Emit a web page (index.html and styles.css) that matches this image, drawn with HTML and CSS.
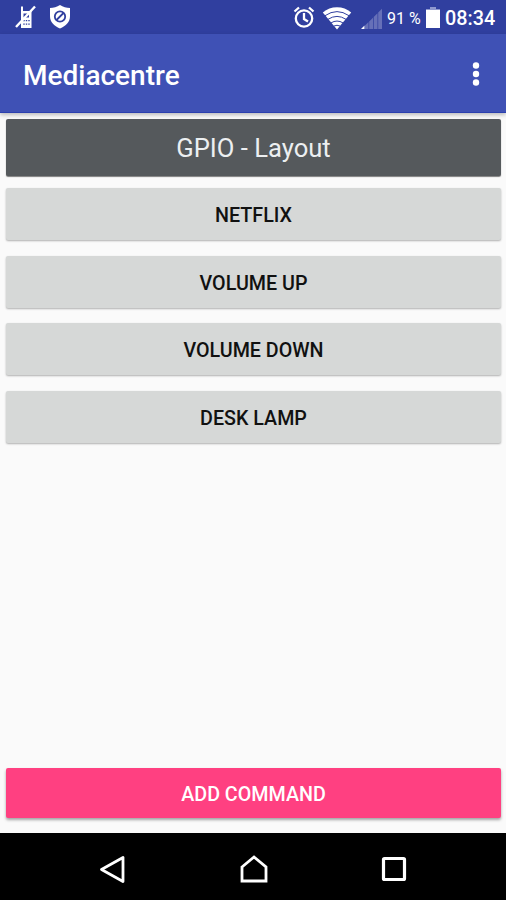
FILE: index.html
```
<!DOCTYPE html>
<html lang="en">
<head>
    <meta charset="UTF-8">
    <meta name="viewport" content="width=device-width, initial-scale=1.0">
    <title>Mediacentre</title>
    <link rel="stylesheet" href="styles.css">
</head>
<body>
    <div class="status-bar">
        <!-- phone muted -->
        <svg class="icon-phone" width="22" height="24" viewBox="0 0 22 24">
            <path fill="#fff" d="M6 6V1.500h2V6h8.500v17H6z"/>
            <path fill="#303f9f" d="M8.500 8.500h5.500v4H8.500zM8.300 15h1.400v1.300H8.300zM10.800 15h1.400v1.300h-1.400zM13.300 15h1.400v1.300h-1.400zM8.300 18.500h1.400v1.300H8.300zM10.800 18.500h1.400v1.300h-1.400zM13.300 18.500h1.400v1.300h-1.400z"/>
            <path stroke="#fff" stroke-width="2.400" d="M1 22L20 1.500"/>
        </svg>
        <!-- shield -->
        <svg class="icon-shield" width="22" height="24" viewBox="0 0 22 24">
            <path fill="#fff" d="M11 0C8 2 4.500 3 1 3v8c0 6 4 10 10 12.500C17 21 21 17 21 11V3C17.500 3 14 2 11 0z"/>
            <circle cx="11" cy="11.500" r="5.200" fill="none" stroke="#303f9f" stroke-width="1.800"/>
            <path stroke="#303f9f" stroke-width="1.800" d="M7.500 15l7-7"/>
        </svg>
        <div class="spacer"></div>
        <!-- alarm -->
        <svg class="icon-alarm" width="22" height="23" viewBox="0 0 22 23">
            <g fill="none" stroke="#fff" stroke-width="2.300">
                <circle cx="11" cy="12.500" r="8.200"/>
                <path d="M11 7v6l4 2.500M1.500 5.500L6 1.500M20.500 5.500L16 1.500"/>
            </g>
        </svg>
        <!-- wifi -->
        <svg class="icon-wifi" width="30" height="24" viewBox="0 0 30 24">
            <path fill="#fff" d="M15 23.500L.8 6.500C5 2.800 9.500 1.200 15 1.200s10 1.600 14.200 5.300z"/>
            <path fill="none" stroke="#303f9f" stroke-width="1" d="M3 9.700Q15 1.500 27 9.700M6 13.300Q15 7.500 24 13.300M9 16.900Q15 13.200 21 16.900M12 20Q15 18.500 18 20"/>
        </svg>
        <!-- signal -->
        <svg class="icon-signal" width="22" height="22" viewBox="0 0 22 22">
            <path fill="#6670b8" d="M4 17.500l3.500-3.400V21H4zM8.200 13.500l3.800-3.800V21H8.200zM12.700 9l3.800-3.800V21h-3.800zM17.200 4.500L21 .8V21h-3.800z"/>
            <path fill="#fff" d="M0 21l3.500-3.500V21z"/>
        </svg>
        <span class="percent">91 %</span>
        <!-- battery -->
        <svg class="icon-battery" width="14" height="21" viewBox="0 0 14 21">
            <path fill="#8f98cf" d="M4 0h6v2h4v2H0V2h4z"/>
            <path fill="#fff" d="M0 3h14v18H0z"/>
        </svg>
        <span class="clock">08:34</span>
    </div>

    <header>
        <h1>Mediacentre</h1>
        <svg class="icon-more" width="8" height="24" viewBox="0 0 8 24">
            <g fill="#fff">
                <circle cx="4" cy="3.500" r="3.200"/>
                <circle cx="4" cy="12" r="3.200"/>
                <circle cx="4" cy="20.500" r="3.200"/>
            </g>
        </svg>
    </header>

    <main>
        <div class="layout-title">GPIO - Layout</div>
        <div class="commands">
            <button class="command">NETFLIX</button>
            <button class="command">VOLUME UP</button>
            <button class="command">VOLUME DOWN</button>
            <button class="command">DESK LAMP</button>
        </div>
        <button class="add-command">ADD COMMAND</button>
    </main>

    <footer>
        <svg width="28" height="30" viewBox="0 0 28 30">
            <path fill="none" stroke="#fff" stroke-width="2.800" stroke-linejoin="round" d="M25 3.500v24L3.500 15.500z"/>
        </svg>
        <svg width="30" height="30" viewBox="0 0 30 30">
            <path fill="none" stroke="#fff" stroke-width="2.800" d="M3 13L15 3l12 10v14H3z"/>
        </svg>
        <svg width="26" height="30" viewBox="0 0 26 30">
            <rect x="2.500" y="4.500" width="21" height="21" rx="1" fill="none" stroke="#fff" stroke-width="3.200"/>
        </svg>
    </footer>
</body>
</html>
```
FILE: styles.css
```
* {
    box-sizing: border-box;
}
body {
    font-family: Roboto, "Liberation Sans", sans-serif;
    margin: 0;
    height: 900px;
    display: flex;
    flex-direction: column;
    background-color: #fafafa;
    overflow: hidden;
}
svg {
    display: block;
    flex: none;
}
.status-bar {
    height: 34px;
    padding: 0 11px 0 15px;
    display: flex;
    align-items: center;
    background-color: #303f9f;
    color: #fff;
    white-space: nowrap;
}
.icon-shield {
    margin-left: 12px;
}
.spacer {
    flex: 1;
}
.icon-wifi {
    margin-left: 7px;
    margin-top: 2px;
}
.icon-signal {
    margin-left: 9px;
    margin-top: 3px;
}
.percent {
    width: 39px;
    padding-left: 4px;
    font-size: 16px;
    margin-top: 2px;
}
.icon-battery {
    margin-left: 4px;
    margin-top: 1px;
}
.clock {
    width: 50px;
    margin-left: 5px;
    margin-top: 2px;
    font-size: 19.8px;
    font-weight: 500;
}
header {
    height: 79px;
    padding: 0 26px 0 23px;
    display: flex;
    align-items: center;
    justify-content: space-between;
    background-color: #3f51b5;
    border-bottom: 1px solid #2b40ae;
    box-shadow: 0 2px 4px rgba(0, 0, 0, 0.25);
    color: #fff;
}
.icon-more {
    margin-top: 1px;
}
h1 {
    margin: 4px 0 0;
    font-size: 28px;
    font-weight: 500;
}
main {
    flex: 1;
    padding: 6px 5px 15px 6px;
    display: flex;
    flex-direction: column;
}
.layout-title {
    height: 57px;
    line-height: 59px;
    border-radius: 2px;
    background-color: #55595c;
    box-shadow: 0 1px 1px rgba(0, 0, 0, 0.5);
    color: #eceff1;
    font-size: 25.6px;
    text-align: center;
}
.commands {
    flex: 1;
    padding-top: 12px;
    display: flex;
    flex-direction: column;
    gap: 15.5px;
}
button {
    border: none;
    border-radius: 2px;
    padding: 2px 0 0;
    font-family: inherit;
    font-size: 19.7px;
    font-weight: 500;
}
.command {
    height: 52px;
    padding-top: 3px;
    background-color: #d6d8d7;
    box-shadow: 0 1px 2px rgba(0, 0, 0, 0.3);
    color: #111;
}
.add-command {
    height: 50px;
    background-color: #ff4081;
    box-shadow: 0 2px 3px rgba(0, 0, 0, 0.35);
    color: #fff;
}
footer {
    height: 67px;
    padding: 4px 99px 0 98px;
    display: flex;
    align-items: center;
    justify-content: space-between;
    background-color: #000;
}
```
